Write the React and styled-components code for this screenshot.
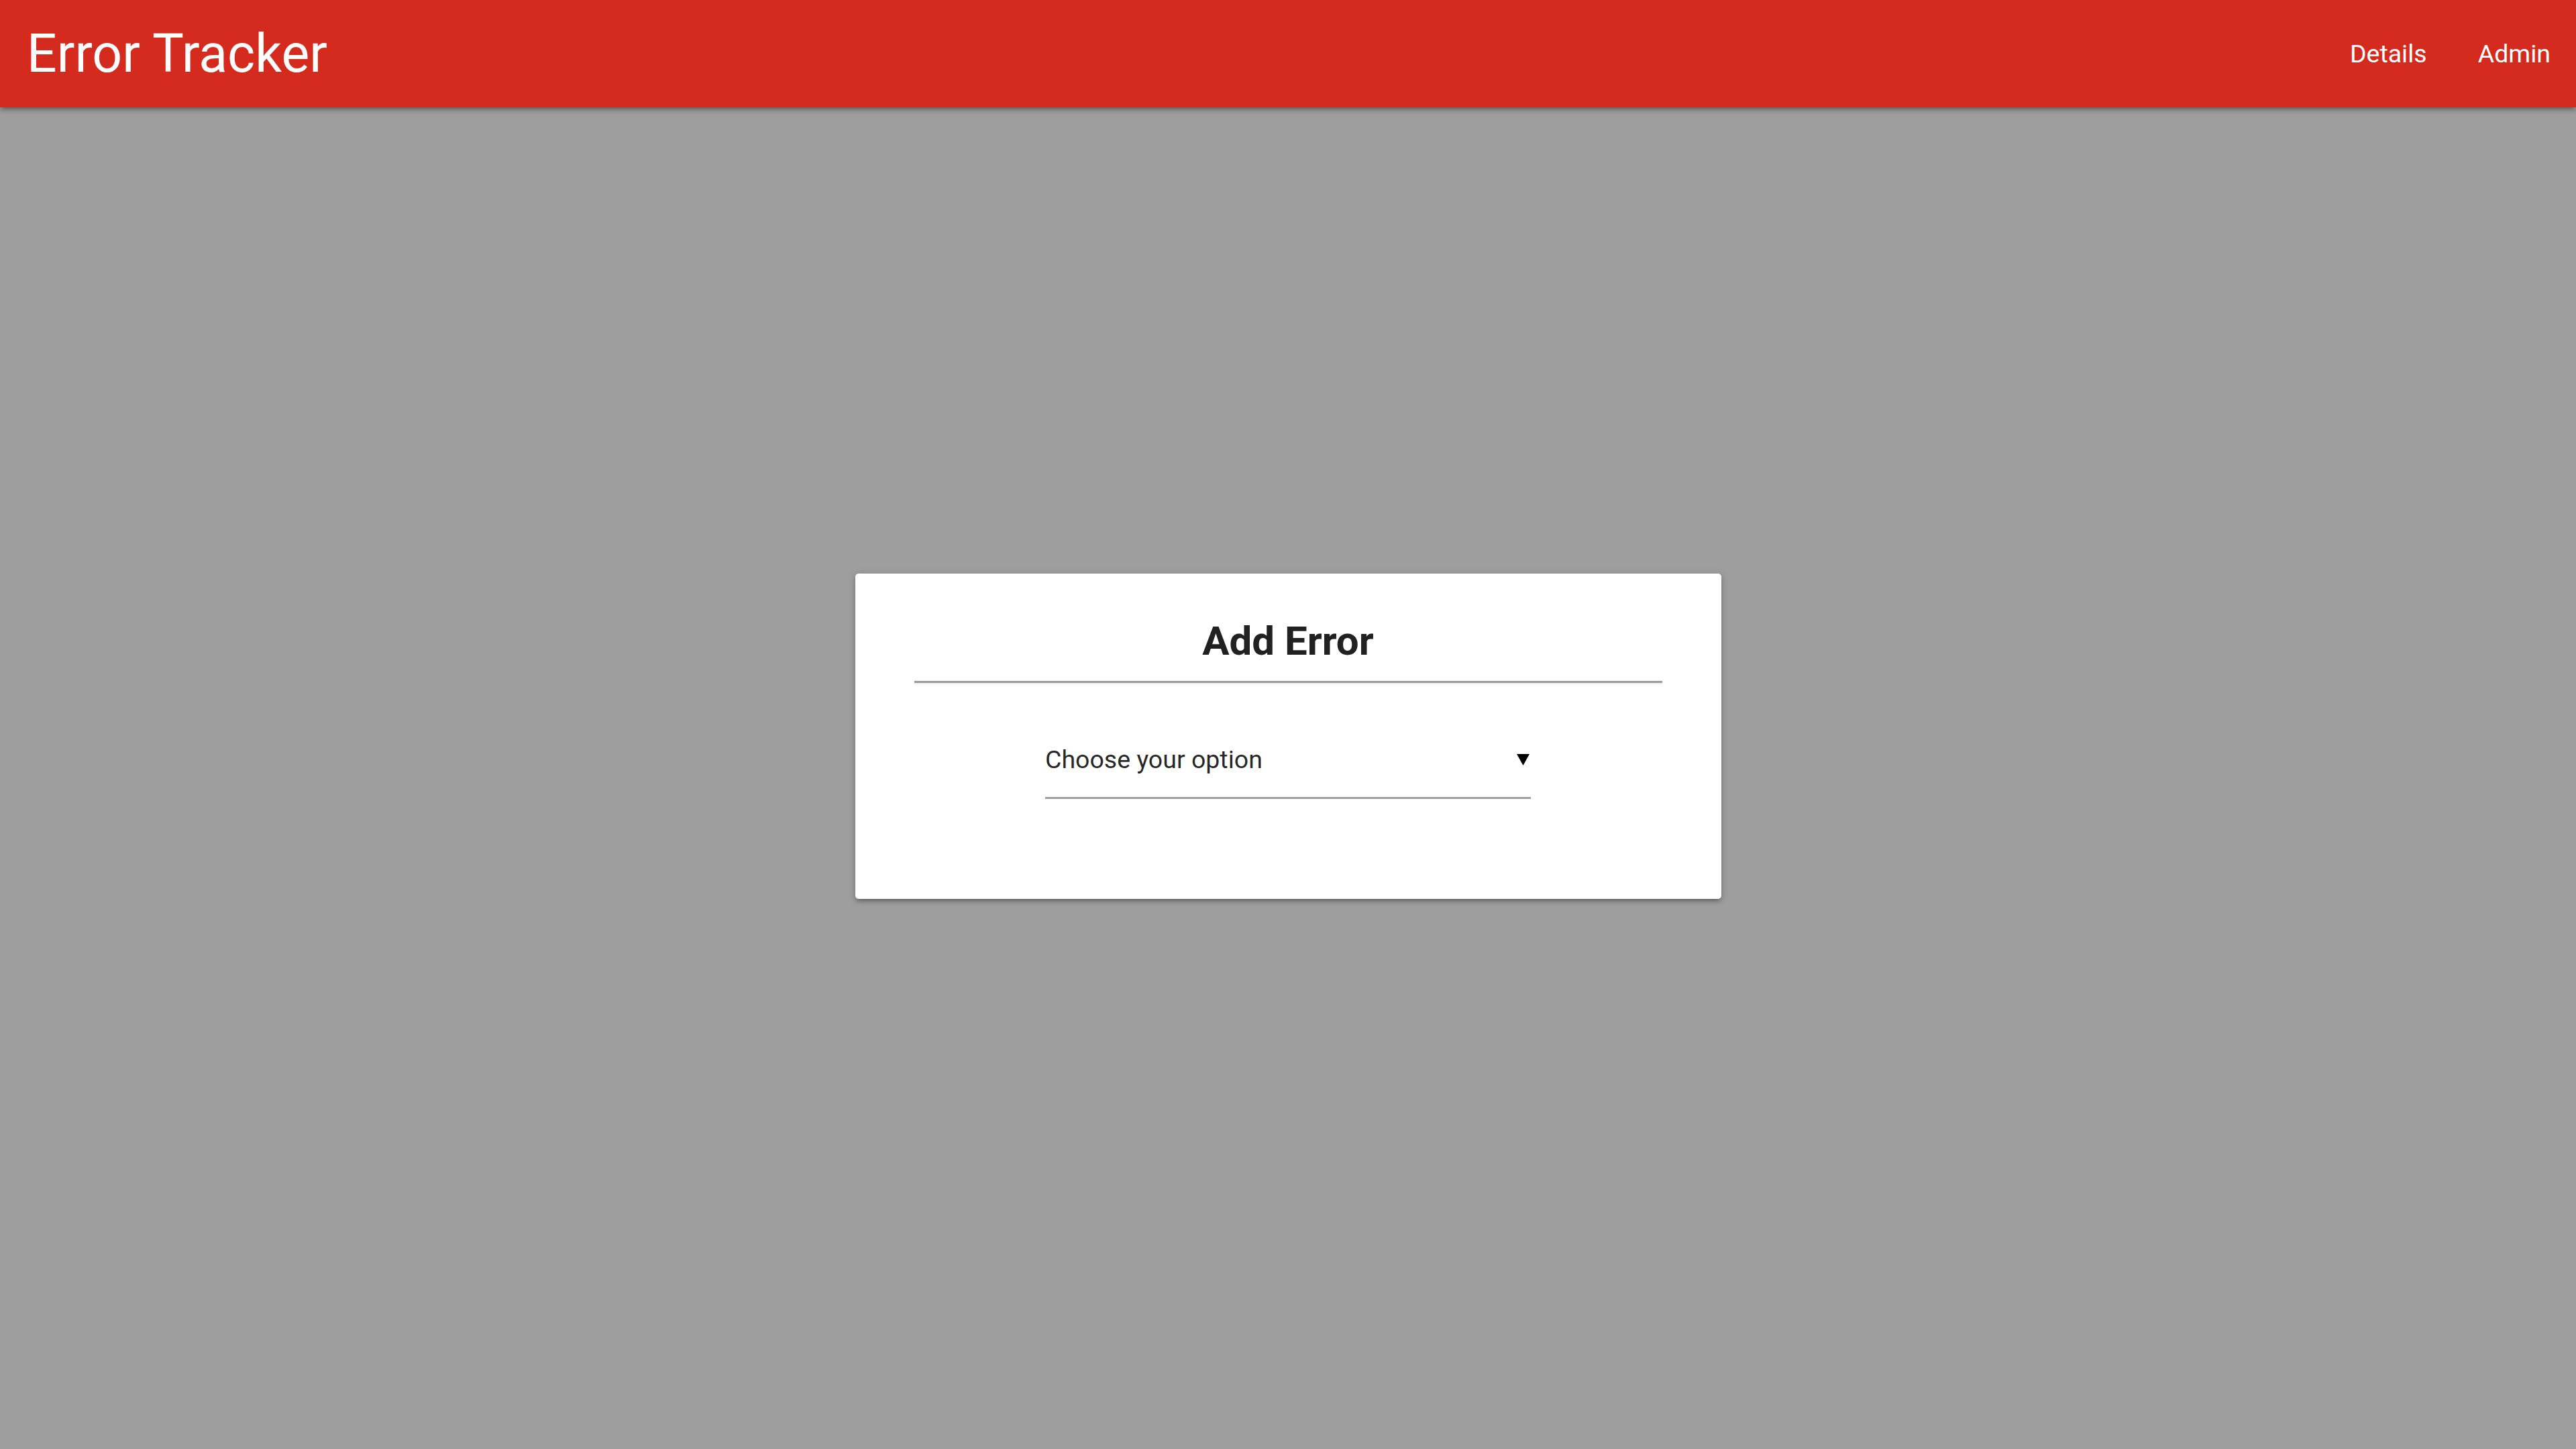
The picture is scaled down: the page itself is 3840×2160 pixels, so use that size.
import React from "react";
import styled, { createGlobalStyle } from "styled-components";

const GlobalStyle = createGlobalStyle`
  html, body {
    margin: 0;
    padding: 0;
    background: #9e9e9e;
    font-family: Roboto, "Liberation Sans", sans-serif;
  }
`;

const Page = styled.div`
  min-height: 2160px;
  background: #9e9e9e;
  display: flex;
  flex-direction: column;
`;

const Nav = styled.nav`
  height: 160px;
  background: #d52b1e;
  color: #fff;
  display: flex;
  align-items: center;
  justify-content: space-between;
  padding: 0 0 0 40px;
  box-shadow: 0 5px 5px 0 rgba(0, 0, 0, 0.14), 0 7px 2px -5px rgba(0, 0, 0, 0.12),
    0 2px 12px 0 rgba(0, 0, 0, 0.2);
  position: relative;
  z-index: 1;
`;

const Brand = styled.a`
  font-size: 78.75px;
  line-height: 160px;
  color: #fff;
  text-decoration: none;
`;

const Links = styled.ul`
  display: flex;
  list-style: none;
  margin: 0;
  padding: 0;
`;

const NavLink = styled.a`
  display: block;
  padding: 0 38px;
  font-size: 37.5px;
  line-height: 160px;
  color: #fff;
  text-decoration: none;
`;

const Main = styled.main`
  display: flex;
  justify-content: center;
  padding-top: 695px;
`;

const Card = styled.section`
  width: 1291px;
  box-sizing: border-box;
  padding: 65px 88px 149px;
  background: #fff;
  border-radius: 5px;
  box-shadow: 0 5px 5px 0 rgba(0, 0, 0, 0.14), 0 7px 2px -5px rgba(0, 0, 0, 0.12),
    0 2px 12px 0 rgba(0, 0, 0, 0.2);
`;

const Title = styled.h5`
  margin: 0;
  font-size: 60px;
  line-height: 72px;
  font-weight: 700;
  color: #212121;
  text-align: center;
`;

const Rule = styled.hr`
  margin: 23px 0 0;
  height: 0;
  border: 0;
  border-top: 3px solid #9a9a9a;
  border-bottom: 2px solid #eeeeee;
`;

const Field = styled.div`
  width: 724px;
  margin: 56px auto 0;
  height: 112px;
  border-bottom: 3px solid #9e9e9e;
  display: flex;
  align-items: center;
  justify-content: space-between;
  cursor: pointer;
`;

const Placeholder = styled.span`
  font-size: 37.5px;
  line-height: 45px;
  color: rgba(0, 0, 0, 0.87);
`;

const Caret = styled.svg`
  width: 19px;
  height: 17px;
  margin-right: 2px;
`;

export default function App() {
  return (
    <Page>
      <GlobalStyle />
      <Nav>
        <Brand href="#">Error Tracker</Brand>
        <Links>
          <li>
            <NavLink href="#">Details</NavLink>
          </li>
          <li>
            <NavLink href="#">Admin</NavLink>
          </li>
        </Links>
      </Nav>
      <Main>
        <Card>
          <Title>Add Error</Title>
          <Rule />
          <Field>
            <Placeholder>Choose your option</Placeholder>
            <Caret viewBox="0 0 19 17">
              <polygon points="0,0 19,0 9.5,17" fill="#000" />
            </Caret>
          </Field>
        </Card>
      </Main>
    </Page>
  );
}
